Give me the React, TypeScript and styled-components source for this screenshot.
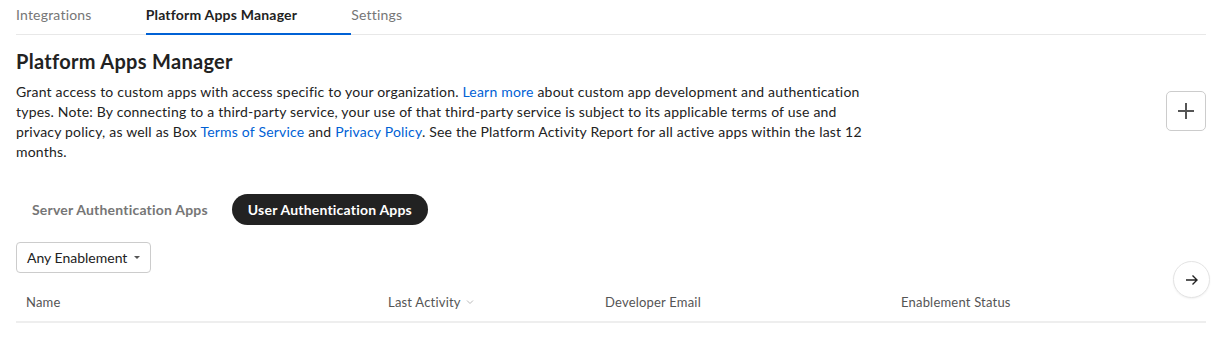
import styled, { createGlobalStyle } from "styled-components";

const GlobalStyle = createGlobalStyle`
  body {
    margin: 0;
    background: #fff;
    font-family: Lato, "Open Sans", sans-serif;
    color: #222;
    letter-spacing: 0.2px;
  }
`;

const tabs = ["Integrations", "Platform Apps Manager", "Settings"];
const columns = ["Name", "Last Activity", "Developer Email", "Enablement Status"];

const App = () => {
  return (
    <>
      <GlobalStyle />
      <Page>
        <TabBar>
          {tabs.map((t) => (
            <Tab key={t} $active={t === "Platform Apps Manager"}>
              {t}
            </Tab>
          ))}
        </TabBar>

        <Header>
          <div>
            <Title>Platform Apps Manager</Title>
            <Description>
              Grant access to custom apps with access specific to your organization.{" "}
              <Link>Learn more</Link> about custom app development and authentication types.
              Note: By connecting to a third-party service, your use of that third-party service
              is subject to its applicable terms of use and privacy policy, as well as Box{" "}
              <Link>Terms of Service</Link> and <Link>Privacy Policy</Link>. See the Platform
              Activity Report for all active apps within the last 12 months.
            </Description>
          </div>
          <AddButton aria-label="add app">
            <svg width="20" height="20" viewBox="0 0 20 20">
              <path d="M10 2v16M2 10h16" stroke="#555" strokeWidth="2" />
            </svg>
          </AddButton>
        </Header>

        <Pills>
          <Pill>Server Authentication Apps</Pill>
          <Pill $active>User Authentication Apps</Pill>
        </Pills>

        <Dropdown>
          Any Enablement
          <Caret />
        </Dropdown>

        <Table>
          <HeaderRow>
            {columns.map((c) => (
              <HeaderCell key={c}>
                {c}
                {c === "Last Activity" && (
                  <svg width="8" height="6" viewBox="0 0 8 6">
                    <path d="M1 1.5l3 3 3-3" fill="none" stroke="#bbb" strokeWidth="1" />
                  </svg>
                )}
              </HeaderCell>
            ))}
          </HeaderRow>
          <ScrollButton aria-label="scroll right">
            <svg width="14" height="14" viewBox="0 0 14 14">
              <path d="M1 7h11M7.5 2.5L12 7l-4.5 4.5" fill="none" stroke="#222" strokeWidth="1.4" />
            </svg>
          </ScrollButton>
        </Table>
      </Page>
    </>
  );
};

const Page = styled.div`
  padding: 0 18px 0 16px;
`;

const TabBar = styled.nav`
  display: flex;
  border-bottom: 1px solid #e8e8e8;
`;

const Tab = styled.div<{ $active?: boolean }>`
  height: 35px;
  box-sizing: border-box;
  padding: 6px 54px 0 0;
  font-size: 14px;
  line-height: 17px;
  font-weight: ${(p) => (p.$active ? 700 : 400)};
  color: ${(p) => (p.$active ? "#222" : "#767676")};
  border-bottom: 2px solid ${(p) => (p.$active ? "#0061d5" : "transparent")};
  margin-bottom: -1px;
`;

const Header = styled.div`
  display: flex;
  justify-content: space-between;
  align-items: center;
  padding-top: 13px;
`;

const Title = styled.h1`
  margin: 0 0 8px;
  font-size: 20px;
  line-height: 26px;
  font-weight: 700;
  letter-spacing: 0.3px;
  color: #222;
`;

const Description = styled.p`
  margin: 0;
  max-width: 862px;
  font-size: 14px;
  line-height: 20px;
  color: #222;
`;

const Link = styled.a`
  color: #0061d5;
  text-decoration: none;
`;

const AddButton = styled.button`
  width: 40px;
  height: 40px;
  margin-top: 12px;
  display: flex;
  align-items: center;
  justify-content: center;
  background: #fff;
  border: 1px solid #ccc;
  border-radius: 5px;
  padding: 0;
`;

const Pills = styled.div`
  display: flex;
  gap: 8px;
  margin-top: 32px;
`;

const Pill = styled.div<{ $active?: boolean }>`
  height: 31px;
  padding: 0 16px;
  display: flex;
  align-items: center;
  border-radius: 16px;
  font-size: 14px;
  font-weight: 700;
  background: ${(p) => (p.$active ? "#222" : "transparent")};
  color: ${(p) => (p.$active ? "#fff" : "#767676")};
`;

const Dropdown = styled.div`
  display: inline-flex;
  align-items: center;
  gap: 7px;
  margin-top: 17px;
  height: 31px;
  box-sizing: border-box;
  padding: 0 10px 0 10px;
  border: 1px solid #ccc;
  border-radius: 4px;
  font-size: 14px;
  letter-spacing: 0;
  color: #222;
`;

const Caret = styled.span`
  width: 0;
  height: 0;
  border-left: 3px solid transparent;
  border-right: 3px solid transparent;
  border-top: 3px solid #555;
`;

const Table = styled.div`
  position: relative;
  margin-top: 16px;
`;

const HeaderRow = styled.div`
  display: grid;
  grid-template-columns: 362px 217px 296px 1fr;
  height: 32px;
  align-items: end;
  border-bottom: 2px solid #eee;
  box-sizing: content-box;
`;

const HeaderCell = styled.div`
  display: flex;
  align-items: center;
  gap: 5px;
  padding: 0 10px 11px;
  font-size: 13px;
  color: #555;
`;

const ScrollButton = styled.button`
  position: absolute;
  right: -4px;
  top: -28px;
  width: 37px;
  height: 37px;
  border-radius: 50%;
  border: 1px solid #e4e4e4;
  background: #fff;
  display: flex;
  align-items: center;
  justify-content: center;
  padding: 0;
  box-shadow: 0 1px 2px rgba(0, 0, 0, 0.06);
`;

export default App;
